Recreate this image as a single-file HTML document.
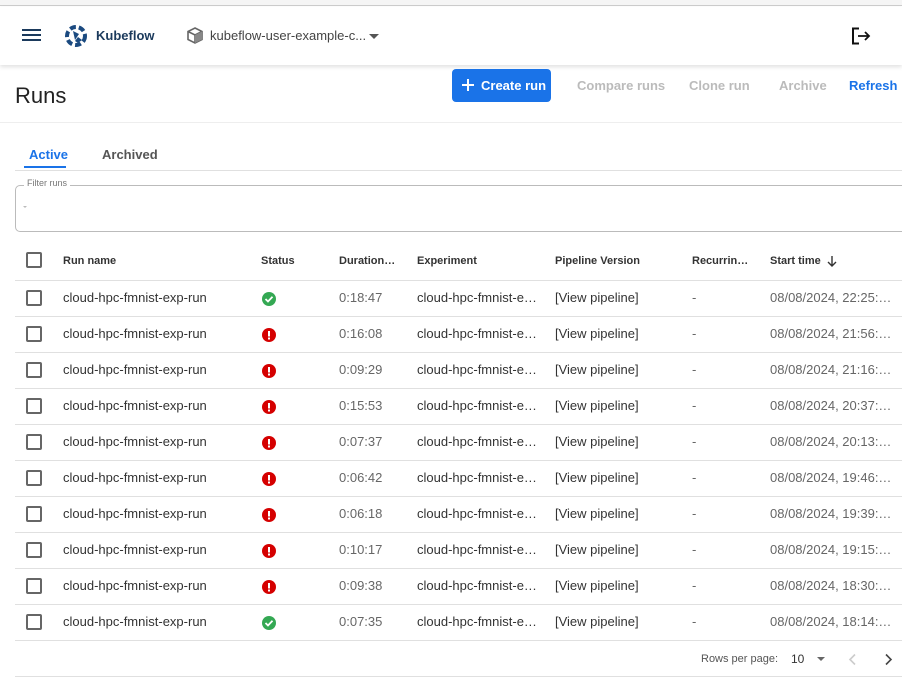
<!DOCTYPE html>
<html><head><meta charset="utf-8"><style>
*{margin:0;padding:0;box-sizing:border-box}
body{width:902px;height:680px;overflow:hidden;background:#fff;font-family:"Liberation Sans",sans-serif;position:relative;color:#333}
.a{position:absolute;white-space:nowrap}
.top{left:0;top:0;width:902px;height:6px;background:#f5f5f5;border-bottom:1px solid #ccc}
.hdr{left:0;top:7px;width:902px;height:58px;background:#fff;box-shadow:0 2px 4px rgba(0,0,0,.12)}
.cb{position:absolute;left:26px;width:16px;height:16px;border:2px solid #666;border-radius:2px}
.hl{position:absolute;left:15px;width:887px;height:1px;background:#e0e0e0}
.th{font-size:11px;font-weight:bold;color:#333}
.td{font-size:13px}
.g{color:#666}
.btn{font-size:13px;font-weight:bold;color:#bbb}
</style></head><body>
<div class="a top"></div>
<div class="a hdr"></div>
<div class="a" style="left:22px;top:29px;width:19px;height:2px;background:#1b3a5c"></div>
<div class="a" style="left:22px;top:34px;width:19px;height:2px;background:#1b3a5c"></div>
<div class="a" style="left:22px;top:39px;width:19px;height:2px;background:#1b3a5c"></div>
<svg class="a" style="left:65px;top:25px" width="22" height="22" viewBox="0 0 22 22">
<circle cx="11" cy="11" r="9" fill="none" stroke="#1b4a80" stroke-width="4" stroke-dasharray="6 3"/>
<path d="M8 6 L14 9 L10 15 Z" fill="#1b4a80"/><path d="M13 12 L17 15 L13 18 L10 16Z" fill="#1b4a80"/>
</svg>
<div class="a" style="left:96px;top:28px;font-size:13px;font-weight:bold;color:#1b3a5c">Kubeflow</div>
<svg class="a" style="left:187px;top:27px" width="16" height="17" viewBox="0 0 16 17"><path d="M8 1 L15 4.5 V12.5 L8 16 L1 12.5 V4.5Z M1 4.5 L8 8 L15 4.5 M8 8 V16" fill="none" stroke="#666" stroke-width="1.6"/><path d="M8 8 L15 4.5 V12.5 L8 16Z" fill="#888"/></svg>
<div class="a" style="left:210px;top:28px;font-size:13px;color:#444">kubeflow-user-example-c...</div>
<div class="a" style="left:369px;top:34px;width:0;height:0;border-left:5px solid transparent;border-right:5px solid transparent;border-top:5px solid #555"></div>
<svg class="a" style="left:851px;top:27px" width="20" height="18" viewBox="0 0 20 18"><path d="M8 1.5 H2 V16.5 H8" fill="none" stroke="#111" stroke-width="2"/><path d="M7 9 H18 M14 5 L18 9 L14 13" fill="none" stroke="#111" stroke-width="1.8"/></svg>

<div class="a" style="left:15px;top:83px;font-size:22px;color:#222">Runs</div>
<div class="a" style="left:452px;top:69px;width:99px;height:33px;background:#1a73e8;border-radius:4px"></div>
<svg class="a" style="left:462px;top:79px" width="12" height="12" viewBox="0 0 12 12"><path d="M6 0 V12 M0 6 H12" stroke="#fff" stroke-width="2"/></svg>
<div class="a" style="left:481px;top:78px;color:#fff;font-size:13px;font-weight:bold">Create run</div>
<div class="a btn" style="left:577px;top:78px">Compare runs</div>
<div class="a btn" style="left:689px;top:78px">Clone run</div>
<div class="a btn" style="left:779px;top:78px">Archive</div>
<div class="a btn" style="left:849px;top:78px;color:#1a73e8">Refresh</div>
<div class="a" style="left:0;top:122px;width:902px;height:1px;background:#eee"></div>

<div class="a" style="left:29px;top:147px;font-size:13px;font-weight:bold;color:#1a73e8">Active</div>
<div class="a" style="left:102px;top:147px;font-size:13px;font-weight:bold;color:#555">Archived</div>
<div class="a" style="left:24px;top:166px;width:42px;height:2px;background:#1a73e8"></div>
<div class="a" style="left:15px;top:170px;width:887px;height:1px;background:#e0e0e0"></div>

<div class="a" style="left:15px;top:185px;width:900px;height:47px;border:1px solid #bbb;border-radius:5px"></div>
<div class="a" style="left:24px;top:178px;background:#fff;padding:0 3px;font-size:9px;color:#777">Filter runs</div>
<div class="a" style="left:23px;top:206px;width:0;height:0;border-left:2px solid transparent;border-right:2px solid transparent;border-top:2px solid #bbb"></div>

<div class="cb" style="top:252px"></div>
<div class="a th" style="left:63px;top:255px">Run name</div>
<div class="a th" style="left:261px;top:255px">Status</div>
<div class="a th" style="left:339px;top:255px">Duration…</div>
<div class="a th" style="left:417px;top:255px">Experiment</div>
<div class="a th" style="left:555px;top:255px">Pipeline Version</div>
<div class="a th" style="left:692px;top:255px">Recurrin…</div>
<div class="a th" style="left:770px;top:255px">Start time</div>
<svg class="a" style="left:827px;top:255px" width="10" height="12" viewBox="0 0 10 12"><path d="M5 1 V11 M1 7 L5 11 L9 7" fill="none" stroke="#333" stroke-width="1.4"/></svg>
<div class="hl" style="top:280px"></div>

<div id="rows"></div>
<script>
var d=[["ok","0:18:47","22:25"],["e","0:16:08","21:56"],["e","0:09:29","21:16"],["e","0:15:53","20:37"],["e","0:07:37","20:13"],["e","0:06:42","19:46"],["e","0:06:18","19:39"],["e","0:10:17","19:15"],["e","0:09:38","18:30"],["ok","0:07:35","18:14"]];
var h="";
d.forEach(function(r,i){var y=280+i*36;
h+='<div class="cb" style="top:'+(y+10)+'px"></div>';
h+='<div class="a td" style="left:63px;top:'+(y+10)+'px">cloud-hpc-fmnist-exp-run</div>';
if(r[0]=="ok")h+='<svg class="a" style="left:262px;top:'+(y+12)+'px" width="14" height="14" viewBox="0 0 14 14"><circle cx="7" cy="7" r="7" fill="#34a853"/><path d="M3.5 7 L6 9.5 L10.5 4.8" fill="none" stroke="#fff" stroke-width="1.8"/></svg>';
else h+='<svg class="a" style="left:262px;top:'+(y+12)+'px" width="14" height="14" viewBox="0 0 14 14"><circle cx="7" cy="7" r="7" fill="#d50000"/><rect x="6" y="3" width="2" height="5.5" fill="#fff"/><rect x="6" y="9.5" width="2" height="2" fill="#fff"/></svg>';
h+='<div class="a td g" style="left:339px;top:'+(y+10)+'px">'+r[1]+'</div>';
h+='<div class="a td" style="left:417px;top:'+(y+10)+'px">cloud-hpc-fmnist-e…</div>';
h+='<div class="a td" style="left:555px;top:'+(y+10)+'px">[View pipeline]</div>';
h+='<div class="a td g" style="left:692px;top:'+(y+10)+'px">-</div>';
h+='<div class="a td g" style="left:770px;top:'+(y+10)+'px">08/08/2024, '+r[2]+':…</div>';
h+='<div class="hl" style="top:'+(y+36)+'px"></div>';});
document.getElementById("rows").innerHTML=h;
</script>
<div class="a" style="left:701px;top:653px;font-size:11px;color:#555">Rows per page:</div>
<div class="a" style="left:791px;top:652px;font-size:12px;color:#333">10</div>
<div class="a" style="left:817px;top:657px;width:0;height:0;border-left:4px solid transparent;border-right:4px solid transparent;border-top:4px solid #666"></div>
<svg class="a" style="left:847px;top:653px" width="10" height="13" viewBox="0 0 10 13"><path d="M8 1.5 L3 6.5 L8 11.5" fill="none" stroke="#ccc" stroke-width="1.6"/></svg>
<svg class="a" style="left:884px;top:653px" width="10" height="13" viewBox="0 0 10 13"><path d="M2 1.5 L7 6.5 L2 11.5" fill="none" stroke="#444" stroke-width="1.6"/></svg>
<div class="hl" style="top:676px"></div>
</body></html>
